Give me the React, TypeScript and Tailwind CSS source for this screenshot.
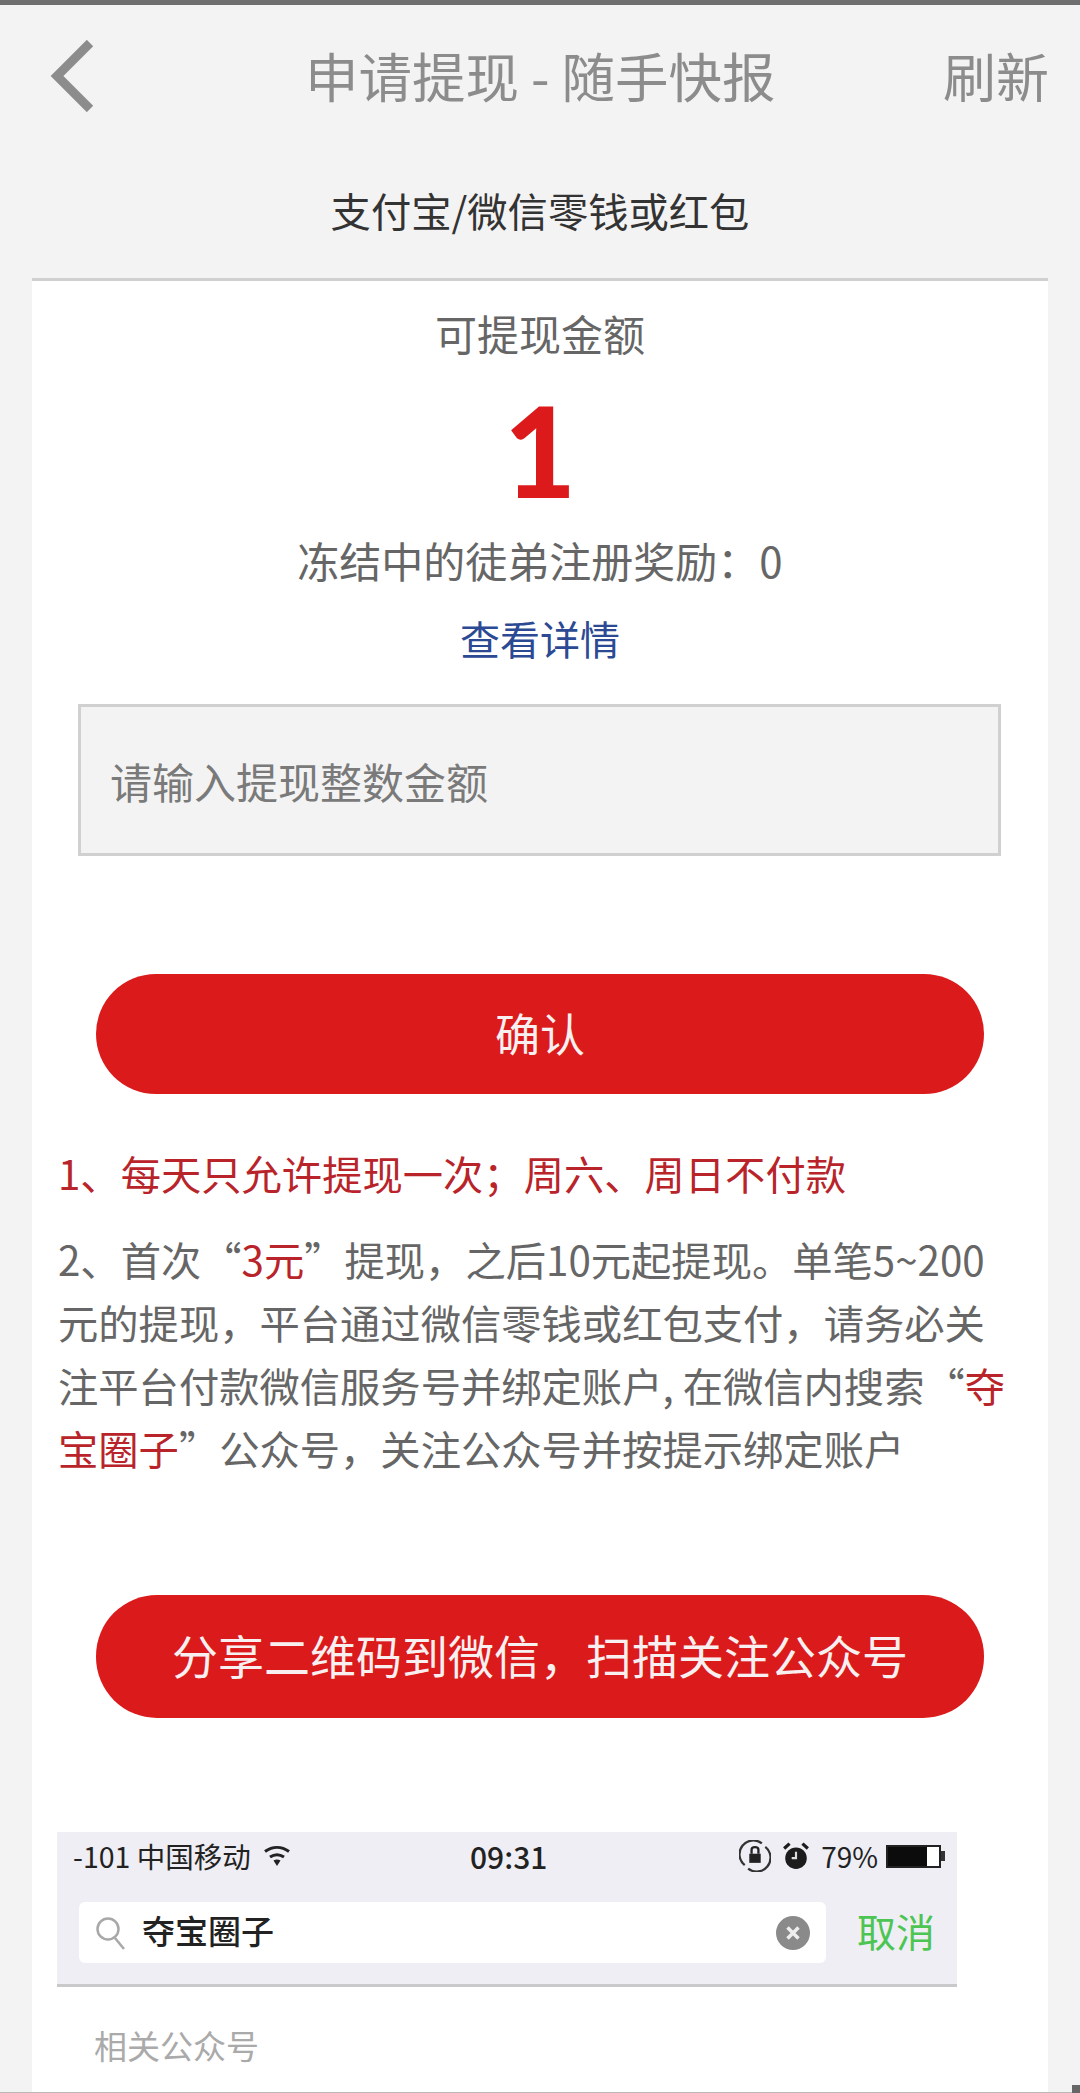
import { useState } from 'react';

const cjk = { fontFamily: '"Noto Sans CJK SC", "Liberation Sans", sans-serif' };

function BackIcon() {
  return (
    <svg width="44" height="72" viewBox="0 0 44 72" className="block">
      <polyline points="40,3 7,36 40,69" fill="none" stroke="#8c8c8c" strokeWidth="9" />
    </svg>
  );
}

function WifiIcon() {
  return (
    <svg width="28" height="22" viewBox="0 0 28 22" className="block">
      <path d="M2 6.5C9.5 1 18.5 1 26 6.5" fill="none" stroke="#222" strokeWidth="3" />
      <path d="M7 12C11.5 9 16.5 9 21 12" fill="none" stroke="#222" strokeWidth="3" />
      <path d="M10.5 15.5L14 21L17.5 15.5C15.5 14.3 12.5 14.3 10.5 15.5Z" fill="#222" />
    </svg>
  );
}

function LockRotationIcon() {
  return (
    <svg width="32" height="32" viewBox="0 0 28 28" className="block">
      <path d="M5 22A12 12 0 0 1 20 3" fill="none" stroke="#333" strokeWidth="2" />
      <path d="M23 6A12 12 0 0 1 8 25" fill="none" stroke="#333" strokeWidth="2" />
      <rect x="9" y="12" width="10" height="8" fill="#222" />
      <path d="M11 12V8.5C11 5.5 17 5.5 17 8.5V12" fill="none" stroke="#222" strokeWidth="2" />
    </svg>
  );
}

function AlarmIcon() {
  return (
    <svg width="26" height="28" viewBox="0 0 24 26" className="block">
      <circle cx="12" cy="15" r="10" fill="#1c1c1c" />
      <path d="M12 9V15H8" fill="none" stroke="#ddd" strokeWidth="2" />
      <path d="M1 6L6 1.5M23 6L18 1.5" stroke="#1c1c1c" strokeWidth="3" />
    </svg>
  );
}

function BatteryIcon() {
  return (
    <div className="flex items-center">
      <div className="h-[23px] w-[55px] border-2 border-[#222] bg-white">
        <div className="h-full w-[76%] bg-[#0c0c0c]" />
      </div>
      <div className="h-[10px] w-[4px] bg-[#333]" />
    </div>
  );
}

function SearchGlass() {
  return (
    <svg width="32" height="36" viewBox="0 0 32 36" className="block">
      <circle cx="13" cy="14" r="10.5" fill="none" stroke="#a8a8a8" strokeWidth="2.5" />
      <path d="M20 23L29 34" stroke="#a8a8a8" strokeWidth="2.5" />
    </svg>
  );
}

function ClearIcon() {
  return (
    <svg width="34" height="34" viewBox="0 0 34 34" className="block">
      <circle cx="17" cy="17" r="17" fill="#8a8a8a" />
      <path d="M11.5 11.5L22.5 22.5M22.5 11.5L11.5 22.5" stroke="#eee" strokeWidth="3.5" />
    </svg>
  );
}

export default function App() {
  const [amount, setAmount] = useState('');

  return (
    <div lang="zh-CN" style={cjk} className="relative h-[2093px] w-[1080px] overflow-hidden bg-[#f3f3f3]">
      <div className="h-[5px] bg-[#6e6e6e]" />

      {/* title bar */}
      <header className="flex h-[150px] items-center pb-[10px] pl-[50px] pr-[31px] text-[#8c8c8c]">
        <button aria-label="back" className="w-[255px] shrink-0 pt-[2px]">
          <BackIcon />
        </button>
        <h1 className="flex-1 whitespace-nowrap text-[53.5px] font-normal leading-none">申请提现 - 随手快报</h1>
        <button className="shrink-0 text-[53px] leading-none">刷新</button>
      </header>

      <div className="flex h-[123px] items-start justify-center pt-[26px] text-[40.3px] leading-[58px] text-[#333]">
        支付宝/微信零钱或红包
      </div>

      <main className="mx-[32px] h-[1814px] border-t-[3px] border-[#d0d0d0] bg-white">
        <div className="flex flex-col items-center text-[42px] text-[#666]">
          <p className="mt-[22px] leading-[60px]">可提现金额</p>
          <p
            style={{ fontFamily: 'Lato, "DejaVu Sans", sans-serif' }}
            className="mt-[22px] pb-[1px] text-[125px] font-black leading-[130px] text-[#dc1a1b]"
          >
            1
          </p>
          <p className="mt-[14px] leading-[60px]">冻结中的徒弟注册奖励：0</p>
          <a className="mt-[18px] text-[40px] leading-[60px] text-[#2c4a94]">查看详情</a>
        </div>

        <input
          value={amount}
          onChange={(e) => setAmount(e.target.value)}
          placeholder="请输入提现整数金额"
          className="mx-[46px] mt-[36px] block h-[152px] w-[923px] border-[3px] border-[#d0d0d0] bg-[#f3f3f3] px-[29px] text-[42px] text-[#333] outline-none placeholder:text-[#7a7a7a]"
        />

        <button className="mx-[64px] mt-[118px] block h-[120px] w-[888px] rounded-[60px] bg-[#db1a1b] pb-[2px] text-[45px] text-[#f8f0f0]">
          确认
        </button>

        <div className="mx-[26px] mt-[49px] w-[970px] text-[40.3px] text-[#666]">
          <p className="leading-[60px] text-[#b8242a]">1、每天只允许提现一次；周六、周日不付款</p>
          <p className="mt-[24px] leading-[63px]">
            2、首次“<span className="text-[#b8242a]">3元</span>”提现，之后10元起提现。单笔5~200
            <br />
            元的提现，平台通过微信零钱或红包支付，请务必关
            <br />
            注平台付款微信服务号并绑定账户, 在微信内搜索“<span className="text-[#b8242a]">夺</span>
            <br />
            <span className="text-[#b8242a]">宝圈子</span>”公众号，关注公众号并按提示绑定账户
          </p>
        </div>

        <button className="mx-[64px] mt-[116px] block h-[123px] w-[888px] rounded-[61px] bg-[#db1a1b] pb-[4px] text-[46px] text-[#f8f0f0]">
          分享二维码到微信，扫描关注公众号
        </button>

        {/* embedded phone screenshot */}
        <figure className="mx-[25px] mt-[114px] w-[900px]">
          <div className="border-b-[3px] border-[#c9c9cc] bg-[#eeeef4]">
            <div className="flex h-[50px] items-center pb-[2px] pl-[16px] pr-[12px] text-[28.5px] text-[#222]">
              <div className="flex w-[397px] items-center gap-[12px]">
                <span className="whitespace-nowrap">-101 中国移动</span>
                <WifiIcon />
              </div>
              <span className="flex-1 text-[30px] font-medium">09:31</span>
              <div className="flex items-center gap-[12px]">
                <LockRotationIcon />
                <AlarmIcon />
                <div className="flex items-center gap-[8px]">
                  <span className="text-[28px]">79%</span>
                  <BatteryIcon />
                </div>
              </div>
            </div>
            <div className="flex items-center pb-[21px] pl-[22px] pr-[22px] pt-[20px]">
              <div className="flex h-[61px] w-[747px] items-center rounded-[6px] bg-white pl-[16px] pr-[16px]">
                <SearchGlass />
                <span className="ml-[15px] flex-1 pb-[3px] text-[33px] font-medium text-[#222]">夺宝圈子</span>
                <ClearIcon />
              </div>
              <span className="ml-[31px] pb-[4px] text-[39px] leading-none text-[#4cc552]">取消</span>
            </div>
          </div>
          <p className="mt-[33px] pl-[37px] text-[33px] leading-[50px] text-[#aaa]">相关公众号</p>
        </figure>
      </main>

      <div className="h-px bg-[#b8b8b8]" />
      {/* scrollbar corner sitting over the page */}
      <div className="absolute bottom-0 right-0 h-[8px] w-[8px] bg-[#666]" />
    </div>
  );
}
